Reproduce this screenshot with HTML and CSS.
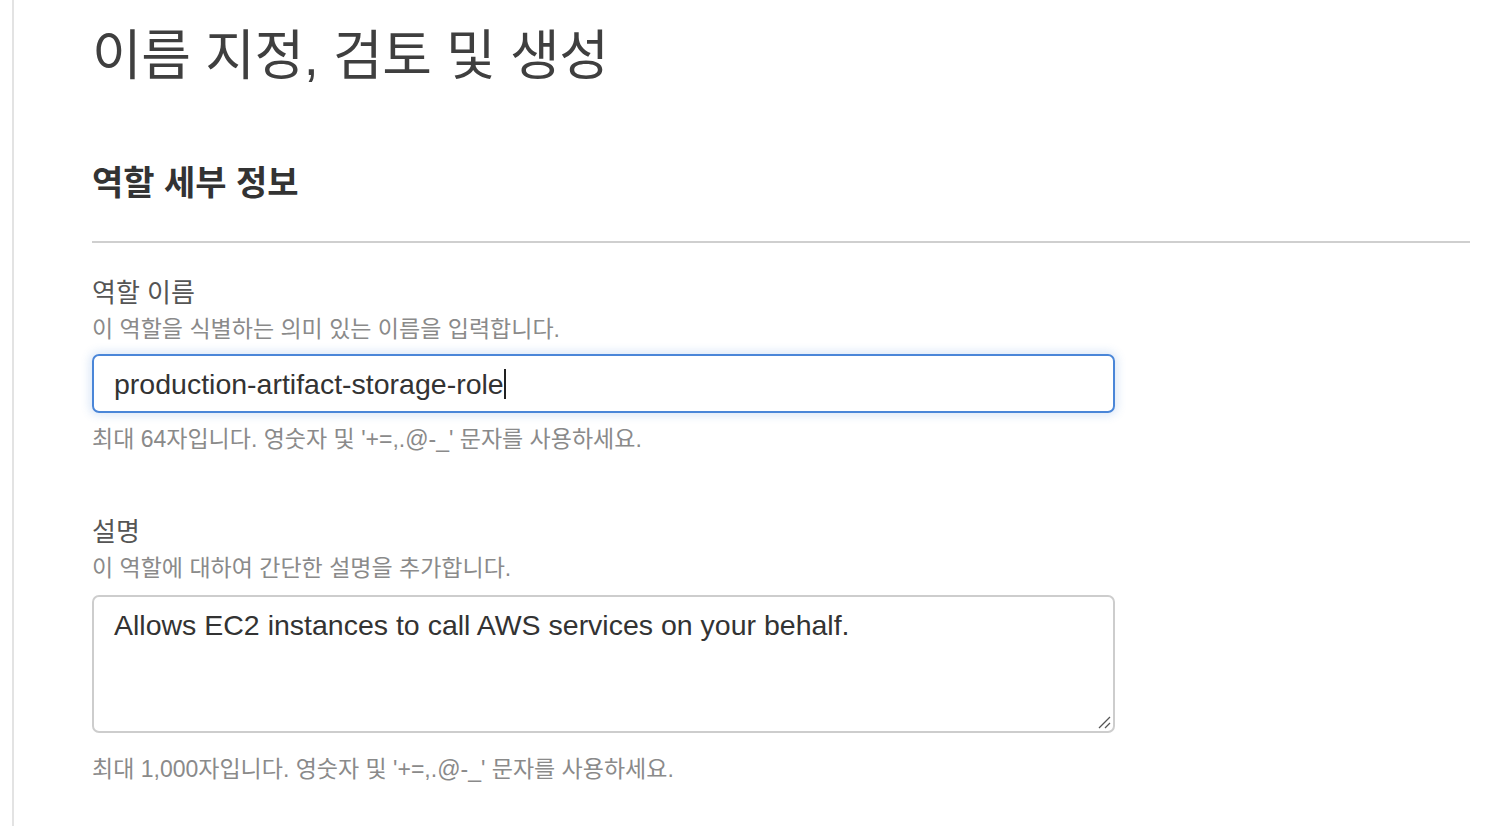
FILE: index.html
```html
<!DOCTYPE html>
<html lang="ko">
<head>
<meta charset="utf-8">
<title>이름 지정, 검토 및 생성</title>
<link rel="stylesheet" href="styles.css">
</head>
<body>
<div class="frame">
  <main class="content">
    <h1 class="page-title">이름 지정, 검토 및 생성</h1>
    <section class="panel">
      <h2 class="panel-title">역할 세부 정보</h2>
      <hr class="divider">
      <div class="field">
        <label class="field-label" for="role-name">역할 이름</label>
        <div class="field-desc">이 역할을 식별하는 의미 있는 이름을 입력합니다.</div>
        <div class="input focused"><span class="input-text">production-artifact-storage-role</span><span class="caret"></span></div>
        <div class="field-hint">최대 64자입니다. 영숫자 및 '+=,.@-_' 문자를 사용하세요.</div>
      </div>
      <div class="field">
        <label class="field-label" for="role-desc">설명</label>
        <div class="field-desc">이 역할에 대하여 간단한 설명을 추가합니다.</div>
        <div class="textarea">
          <span class="input-text">Allows EC2 instances to call AWS services on your behalf.</span>
          <svg class="grip" width="14" height="14" viewBox="0 0 14 14"><path d="M2 13 L13 2 M8 13 L13 8" stroke="#555" stroke-width="1.3" fill="none"/></svg>
        </div>
        <div class="field-hint">최대 1,000자입니다. 영숫자 및 '+=,.@-_' 문자를 사용하세요.</div>
      </div>
    </section>
  </main>
</div>
</body>
</html>
```
FILE: styles.css
```css
html, body {
  margin: 0;
  padding: 0;
  background: #ffffff;
}
body {
  font-family: "Liberation Sans", "Noto Sans CJK KR", Arial, sans-serif;
  color: #444;
}
.frame {
  padding-left: 12px;
  min-height: 826px;
  box-sizing: border-box;
}
.content {
  border-left: 2px solid #e3e3e3;
  min-height: 826px;
  padding: 0 22px 0 78px;
  box-sizing: border-box;
}
.page-title {
  margin: 0;
  padding-top: 24px;
  font-size: 54px;
  font-weight: 400;
  line-height: 64px;
  color: #3f3f3f;
  letter-spacing: -0.4px;
}
.panel {
  padding-top: 75px;
}
.panel-title {
  margin: 0;
  font-size: 34px;
  line-height: 40px;
  font-weight: 700;
  color: #333;
}
.divider {
  border: 0;
  height: 2px;
  background: #cfcfcf;
  margin: 38px 0 0 0;
}
.field {
  margin-top: 34px;
}
.field + .field {
  margin-top: 63px;
}
.field-label {
  display: block;
  font-size: 26px;
  line-height: 32px;
  color: #555;
}
.field-desc {
  font-size: 23px;
  line-height: 28px;
  color: #8a8a8a;
  margin-top: 6px;
}
.input {
  margin-top: 11px;
  width: 1023px;
  height: 59px;
  box-sizing: border-box;
  border: 2px solid #4a86d8;
  border-radius: 7px;
  box-shadow: 0 0 8px 3px rgba(74, 134, 216, 0.18);
  display: flex;
  align-items: center;
  padding-left: 20px;
}
.input-text {
  font-size: 28.5px;
  line-height: 34px;
  color: #333;
}
.caret {
  display: inline-block;
  width: 2px;
  height: 30px;
  background: #222;
}
.field-hint {
  margin-top: 12px;
  font-size: 23px;
  line-height: 28px;
  color: #8a8a8a;
}
.textarea {
  position: relative;
  margin-top: 13px;
  width: 1023px;
  height: 138px;
  box-sizing: border-box;
  border: 2px solid #cdcdcd;
  border-radius: 7px;
  padding: 11px 20px;
}
.grip {
  position: absolute;
  right: 2px;
  bottom: 2px;
}
.textarea + .field-hint {
  margin-top: 22px;
}
```
